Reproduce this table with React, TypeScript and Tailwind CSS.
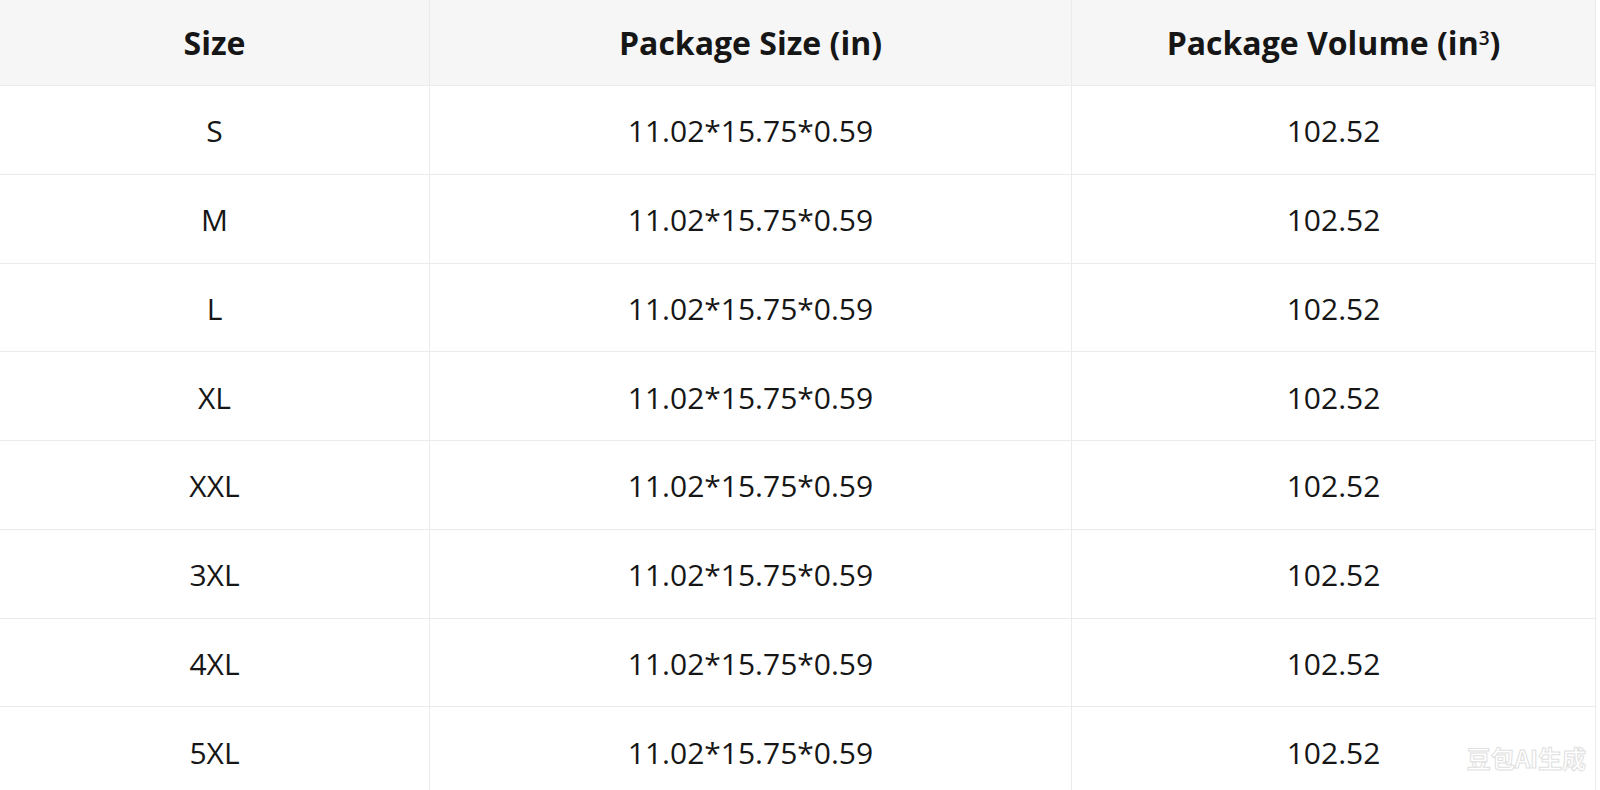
const rows = ["S", "M", "L", "XL", "XXL", "3XL", "4XL", "5XL"];

export default function App() {
  return (
    <div
      className="relative h-[790px] w-[1600px] overflow-hidden bg-white text-[#161616]"
      style={{ fontFamily: '"Open Sans", "Noto Sans", sans-serif' }}
    >
      <div className="w-[1596px] border-r border-[#ebebeb]">
        <div className="grid h-[86px] grid-cols-[430px_642px_1fr] border-b border-[#ebebeb] bg-[#f6f6f6] text-[32px] font-bold">
          <div className="flex items-center justify-center border-r border-[#ebebeb]">Size</div>
          <div className="flex items-center justify-center border-r border-[#ebebeb]">Package Size (in)</div>
          <div className="flex items-center justify-center">
            <span>
              Package Volume (in<sup className="text-[19px] font-semibold">3</sup>)
            </span>
          </div>
        </div>
        {rows.map((size) => (
          <div
            key={size}
            className="grid h-[88.75px] grid-cols-[430px_642px_1fr] border-b border-[#ebebeb] text-[30px]"
          >
            <div className="flex items-center justify-center border-r border-[#ebebeb] pt-[2px]">{size}</div>
            <div className="flex items-center justify-center border-r border-[#ebebeb] pt-[2px]">11.02*15.75*0.59</div>
            <div className="flex items-center justify-center pt-[2px]">102.52</div>
          </div>
        ))}
      </div>
      <div
        className="absolute bottom-[14px] right-[14px] text-[24px] font-bold text-white"
        style={{ fontFamily: '"Noto Sans CJK SC", sans-serif', WebkitTextStroke: "1px #e0e0e0" }}
      >
        豆包AI生成
      </div>
    </div>
  );
}
